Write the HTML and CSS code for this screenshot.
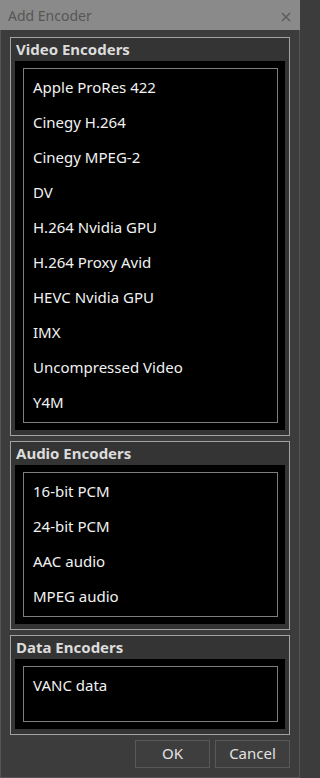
FILE: index.html
```html
<!DOCTYPE html>
<html>
<head>
<meta charset="utf-8">
<link rel="stylesheet" href="styles.css">
</head>
<body>
<div class="window">
  <div class="titlebar">
    <span class="title">Add Encoder</span>
    <svg class="close" width="10" height="10" viewBox="0 0 10 10"><path d="M1 1L9 9M9 1L1 9" stroke="#5e5e5e" stroke-width="1.6" fill="none"/></svg>
  </div>
  <div class="content">
    <div class="group g1">
      <div class="ghead">Video Encoders</div>
      <div class="gbody">
        <div class="list">
          <div class="item">Apple ProRes 422</div>
          <div class="item">Cinegy H.264</div>
          <div class="item">Cinegy MPEG-2</div>
          <div class="item">DV</div>
          <div class="item">H.264 Nvidia GPU</div>
          <div class="item">H.264 Proxy Avid</div>
          <div class="item">HEVC Nvidia GPU</div>
          <div class="item">IMX</div>
          <div class="item">Uncompressed Video</div>
          <div class="item">Y4M</div>
        </div>
      </div>
    </div>
    <div class="group g2">
      <div class="ghead">Audio Encoders</div>
      <div class="gbody">
        <div class="list">
          <div class="item">16-bit PCM</div>
          <div class="item">24-bit PCM</div>
          <div class="item">AAC audio</div>
          <div class="item">MPEG audio</div>
        </div>
      </div>
    </div>
    <div class="group g3">
      <div class="ghead">Data Encoders</div>
      <div class="gbody">
        <div class="list small">
          <div class="item">VANC data</div>
        </div>
      </div>
    </div>
    <div class="buttons">
      <div class="btn">OK</div>
      <div class="btn">Cancel</div>
    </div>
  </div>
</div>
</body>
</html>
```

FILE: styles.css
```css
html, body {
  margin: 0;
  padding: 0;
  background: #3c3c3c;
  overflow: hidden;
}
body {
  font-family: "Noto Sans", "Open Sans", sans-serif;
}
.window {
  width: 300px;
  height: 778px;
  display: flex;
  flex-direction: column;
}
.titlebar {
  height: 30px;
  flex: none;
  background: #8a8a8a;
  display: flex;
  align-items: center;
  justify-content: space-between;
  padding: 0 9px 0 8px;
  box-sizing: border-box;
}
.title {
  font-size: 14px;
  color: #565656;
  line-height: 30px;
  margin-top: 2px;
}
.close {
  margin-top: 3px;
}
.content {
  flex: 1;
  border: 1px solid #555555;
  border-top: none;
  padding: 7px 9px 9px 9px;
  display: flex;
  flex-direction: column;
  gap: 5px;
}
.group {
  border: 1px solid #a2a2a2;
  background: #343434;
  padding: 0 4px 5px 4px;
}
.ghead {
  height: 23px;
  line-height: 22px;
  font-size: 15px;
  font-weight: bold;
  color: #dcdcdc;
  padding-left: 1px;
}
.gbody {
  background: #000;
  padding: 7px 7px 7px 8px;
}
.list {
  border: 1px solid #7e7e7e;
  padding: 1px 0 2px 0;
}
.list.small {
  min-height: 51px;
}
.item {
  height: 35px;
  line-height: 35px;
  font-size: 15px;
  color: #f2f2f2;
  padding-left: 9px;
}
.buttons {
  display: flex;
  justify-content: flex-end;
  gap: 5px;
}
.btn {
  width: 75px;
  height: 28px;
  box-sizing: border-box;
  border: 1px solid #585858;
  background: #3e3e3e;
  color: #e2e2e2;
  font-size: 15px;
  line-height: 25px;
  text-align: center;
}
```
